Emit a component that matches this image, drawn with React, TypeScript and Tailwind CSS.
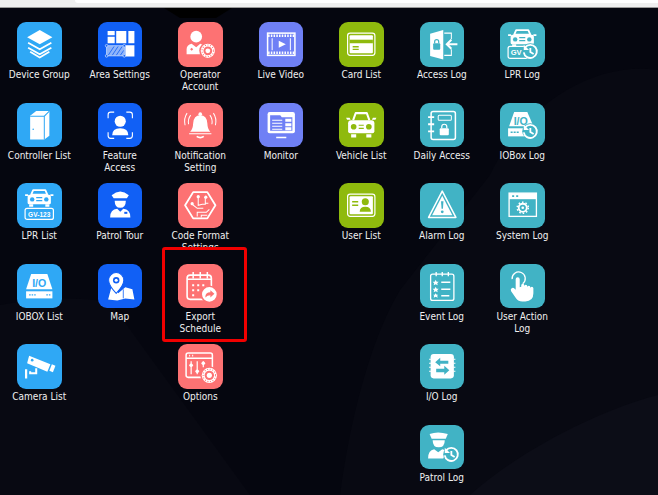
import type { ReactNode } from 'react';

const LIGHT = '#2fa8f5';
const BLUE = '#1160f5';
const CORAL = '#fd7273';
const PERI = '#6f80f5';
const GREEN = '#8fba0d';
const TEAL = '#41b3c5';

type Item = { label: string; color: string; icon: ReactNode; boxed?: boolean };

function Gear({ x, y, r, bg }: { x: number; y: number; r: number; bg: string }) {
  return (
    <g>
      <circle cx={x} cy={y} r={r + 1.5} fill={bg} />
      <circle cx={x} cy={y} r={r} fill="#fff" />
      <circle cx={x} cy={y} r={r * 0.62} fill={bg} />
      <circle cx={x} cy={y} r={r * 0.34} fill="#fff" />
      <circle cx={x} cy={y} r={r * 0.82} fill="none" stroke={bg} strokeWidth="1" strokeDasharray="1 1.6" />
    </g>
  );
}

function History({ x, y, r, bg }: { x: number; y: number; r: number; bg: string }) {
  return (
    <g>
      <circle cx={x} cy={y} r={r + 1.5} fill={bg} />
      <path d={`M${x - r * 0.8} ${y - r * 0.6}A${r} ${r} 0 1 1 ${x - r} ${y + 1}`} fill="none" stroke="#fff" strokeWidth="1.8" />
      <path d={`M${x - r} ${y - r}v${r * 0.8}h${r * 0.8}z`} fill="#fff" />
      <path d={`M${x} ${y - r * 0.5}v${r * 0.6}l${r * 0.5} ${r * 0.3}`} fill="none" stroke="#fff" strokeWidth="1.8" />
    </g>
  );
}

function Icon({ children }: { children: ReactNode }) {
  return (
    <svg viewBox="0 0 44 44" className="w-full h-full" fill="none">
      {children}
    </svg>
  );
}

function CarFront({ y = 0 }: { y?: number }) {
  return (
    <g transform={`translate(0 ${y})`}>
      <path d="M14 11.5l2-4.500h12l2 4.500z" stroke="#fff" strokeWidth="1.800" strokeLinejoin="round" />
      <path d="M10.500 13.500q0-2 2-2h19q2 0 2 2v6q0 1.500-1.500 1.500h-20q-1.500 0-1.500-1.500z" fill="#fff" />
      <path d="M8 11h3v1.800H8zM33 11h3v1.800h-3z" fill="#fff" />
      <circle cx="15" cy="16.200" r="2.200" fill="var(--t)" />
      <circle cx="29" cy="16.200" r="2.200" fill="var(--t)" />
      <path d="M19 14.500h6M19 17.500h6" stroke="var(--t)" strokeWidth="1.200" />
      <path d="M12 21h4v2.500h-4zM28 21h4v2.500h-4z" fill="#fff" />
    </g>
  );
}

const columns: Item[][] = [
  [
    {
      label: 'Device Group',
      color: LIGHT,
      icon: (
        <Icon>
          <path d="M22.500 8L35 15l-12.500 7L10 15z" fill="#fff" />
          <path d="M11 20.500l11.500 6.500L34 20.500M11 25.500L22.500 32 34 25.500M13 29.500l9.500 5.500 9.500-5.500" stroke="#fff" strokeWidth="1.700" />
        </Icon>
      ),
    },
    {
      label: 'Controller List',
      color: LIGHT,
      icon: (
        <Icon>
          <path d="M13 12.500l6-4.500h13v24.500l-5 3.500H13z" fill="#fff" />
          <path d="M27 36V13M13 13h14l5-5" stroke={LIGHT} strokeWidth="1" />
          <circle cx="16" cy="26" r="0.800" fill={LIGHT} />
        </Icon>
      ),
    },
    {
      label: 'LPR List',
      color: LIGHT,
      icon: (
        <Icon>
          <CarFront y={0} />
          <rect x="8" y="25" width="28" height="11" rx="2" stroke="#fff" strokeWidth="1.200" />
          <text x="22" y="33.500" textAnchor="middle" fontSize="6.500" fontWeight="700" fill="#fff" fontFamily="Liberation Sans">
            GV-123
          </text>
        </Icon>
      ),
    },
    {
      label: 'IOBOX List',
      color: LIGHT,
      icon: (
        <Icon>
          <path d="M14 10h16l5 15H9z" fill="#fff" />
          <text x="22" y="23" textAnchor="middle" fontSize="10.500" fontWeight="700" fill={LIGHT} fontFamily="Liberation Sans">
            I/O
          </text>
          <rect x="9" y="27" width="26" height="7" fill="#fff" />
          <path d="M12 30.500h7M29 30.500h4" stroke={LIGHT} strokeWidth="1.200" strokeDasharray="1.500 1" />
        </Icon>
      ),
    },
    {
      label: 'Camera List',
      color: LIGHT,
      icon: (
        <Icon>
          <path d="M12 11.500l21 8.500-3 7.500-20-8.500z" fill="#fff" />
          <path d="M34.500 20l3.500 1.500-2.500 6.500-3.500-1.500z" fill="#fff" />
          <circle cx="15" cy="16" r="1.300" fill={LIGHT} />
          <path d="M19 24v5h-6v-2" stroke="#fff" strokeWidth="2" />
          <path d="M9 25v9" stroke="#fff" strokeWidth="2.200" />
        </Icon>
      ),
    },
  ],
  [
    {
      label: 'Area Settings',
      color: BLUE,
      icon: (
        <Icon>
          <path d="M9.500 9h7v4h-7zM9.500 14.500h7V21h-7zM18 9h10v12H18zM30 9h6v12h-6zM27 23h9v11h-9z" fill="#fff" />
          <rect x="8.500" y="23.500" width="17.500" height="10" fill="#8fb4fa" />
          <path d="M10 33l6-9M14 33l6-9M18 33l6-9M22 33l3.500-5" stroke={BLUE} strokeWidth="0.800" />
          <rect x="8.500" y="23.500" width="17.500" height="10" stroke="#cfe0fd" strokeWidth="0.700" />
          <circle cx="8.500" cy="23.500" r="1.300" stroke="#cfe0fd" strokeWidth="0.700" fill={BLUE} />
          <circle cx="26" cy="23.500" r="1.300" stroke="#cfe0fd" strokeWidth="0.700" fill={BLUE} />
          <circle cx="8.500" cy="33.500" r="1.300" stroke="#cfe0fd" strokeWidth="0.700" fill={BLUE} />
          <circle cx="26" cy="33.500" r="1.300" stroke="#cfe0fd" strokeWidth="0.700" fill={BLUE} />
        </Icon>
      ),
    },
    {
      label: 'Feature Access',
      color: BLUE,
      icon: (
        <Icon>
          <path d="M10 15v-3.500q0-2.500 2.500-2.500H16M28 9h3.500q2.500 0 2.500 2.500V15M34 29v3.500q0 2.500-2.500 2.500H28M16 35h-3.500Q10 35 10 32.500V29" stroke="#fff" strokeWidth="1.100" />
          <circle cx="22" cy="18" r="5.500" fill="#fff" />
          <path d="M14 32q0-7 8-7t8 7z" fill="#fff" />
        </Icon>
      ),
    },
    {
      label: 'Patrol Tour',
      color: BLUE,
      icon: (
        <Icon>
          <path d="M13.500 12q8.500-7 17 0l-2 3h-13z" fill="#fff" />
          <path d="M16.500 17.500h11q0 7-5.500 7t-5.500-7z" fill="#fff" />
          <path d="M12 34q0-8 7-8.500l3 3 3-3q7 .5 7 8.500z" fill="#fff" />
          <rect x="26" y="28.500" width="3" height="2" fill={BLUE} />
        </Icon>
      ),
    },
    {
      label: 'Map',
      color: BLUE,
      icon: (
        <Icon>
          <path d="M10 35l3-11 5 1 2 4 7-6 7 2 2 10-9-1-8 2z" fill="#fff" />
          <path d="M18 8.500a7.500 7.500 0 0 1 7.500 7.500c0 5-7.500 13-7.500 13s-7.500-8-7.500-13A7.500 7.500 0 0 1 18 8.500z" fill="#fff" stroke={BLUE} strokeWidth="1" />
          <circle cx="18" cy="16" r="3.200" fill={BLUE} />
          <circle cx="18" cy="16" r="1.500" fill="#fff" />
          <path d="M25 25v9" stroke={BLUE} strokeWidth="0.800" />
        </Icon>
      ),
    },
  ],
  [
    {
      label: 'Operator Account',
      color: CORAL,
      icon: (
        <Icon>
          <circle cx="18" cy="14.500" r="5.800" fill="#fff" />
          <path d="M8.500 32v-5q0-4.500 5-5.500l4.500 3.500 4-3.500q3 .5 4 2.500l-2 8z" fill="#fff" />
          <path d="M12 27l1.500-1.500L15 27l-1.500 1.500z" fill={CORAL} />
          <Gear x={29.500} y={28.500} r={7} bg={CORAL} />
        </Icon>
      ),
    },
    {
      label: 'Notification Setting',
      color: CORAL,
      icon: (
        <Icon>
          <path d="M22 12q6.500 0 7 8 .2 6 3 8.500H12q2.800-2.500 3-8.500.5-8 7-8z" fill="#fff" />
          <circle cx="22" cy="11" r="1.800" fill="#fff" />
          <path d="M11 30.500h22" stroke="#fff" strokeWidth="1" />
          <path d="M18.500 33q3.500 2.500 7 0" stroke="#fff" strokeWidth="1.800" />
          <path d="M12.500 12q-3 4-2 9M9 10q-3.500 5-2 12M31.500 12q3 4 2 9M35 10q3.500 5 2 12" stroke="#fff" strokeWidth="1" />
        </Icon>
      ),
    },
    {
      label: 'Code Format Settings',
      color: CORAL,
      icon: (
        <Icon>
          <path d="M15 9h14l8 13-8 13H15L7 22z" stroke="#fff" strokeWidth="1.800" strokeLinejoin="round" />
          <path d="M14 21l5 4h6M20 14v8l4-1h3v-7M30 20h-3M19 33v-4h9l3-3M23 34v-2h6" stroke="#fff" strokeWidth="1" />
          <circle cx="14" cy="20.500" r="1.600" fill="#fff" />
          <circle cx="20" cy="13.500" r="1.600" fill="#fff" />
          <circle cx="27.500" cy="14" r="1.600" fill="#fff" />
        </Icon>
      ),
    },
    {
      label: 'Export Schedule',
      color: CORAL,
      boxed: true,
      icon: (
        <Icon>
          <rect x="9" y="11" width="24" height="24" rx="3" stroke="#fff" strokeWidth="1.600" />
          <path d="M15 8v6M22 8v6M29 8v6M9 15h24" stroke="#fff" strokeWidth="1.500" />
          <path d="M14 20h2v2h-2zM19 20h2v2h-2zM24 20h2v2h-2zM14 25h2v2h-2zM19 25h2v2h-2zM14 30h2v2h-2z" fill="#fff" />
          <circle cx="31" cy="30" r="8" fill="#fff" stroke={CORAL} strokeWidth="1.500" />
          <path d="M27 33q0-5 5-5v-2l4 3.500-4 3.500v-2q-3 0-5 2z" fill={CORAL} />
        </Icon>
      ),
    },
    {
      label: 'Options',
      color: CORAL,
      icon: (
        <Icon>
          <rect x="8" y="9" width="26" height="24" rx="2" stroke="#fff" strokeWidth="1.500" />
          <path d="M8 14h26" stroke="#fff" strokeWidth="1.500" />
          <path d="M11 11.500h1M14 11.500h1" stroke="#fff" strokeWidth="1.500" />
          <path d="M13 17v13M19 17v13M25 17v6" stroke="#fff" strokeWidth="1.200" />
          <circle cx="13" cy="21" r="1.800" fill="#fff" />
          <circle cx="19" cy="27" r="1.800" fill="#fff" />
          <circle cx="25" cy="19" r="1.800" fill="#fff" />
          <Gear x={31} y={31} r={7.500} bg={CORAL} />
        </Icon>
      ),
    },
  ],
  [
    {
      label: 'Live Video',
      color: PERI,
      icon: (
        <Icon>
          <rect x="8.500" y="11" width="27" height="22" stroke="#fff" strokeWidth="1.500" />
          <path d="M9 13.500h26M9 30.500h26" stroke="#fff" strokeWidth="2.500" strokeDasharray="1.500 1.200" />
          <path d="M13 16v12M31 16v12" stroke="#fff" strokeWidth="1" />
          <path d="M19.500 18.500l7 3.500-7 3.500z" fill="#fff" />
        </Icon>
      ),
    },
    {
      label: 'Monitor',
      color: PERI,
      icon: (
        <Icon>
          <rect x="8.500" y="9" width="27" height="21" rx="2" fill="#fff" />
          <path d="M11 12h10l1.500 2H33v13.500H11z" fill={PERI} />
          <path d="M24 11h3M28.500 11h3M13 17h10M13 20h10M13 23h10M13 26h10" stroke="#fff" strokeWidth="1" />
          <path d="M26 15.500h6v3h-6zM26 20h6v3h-6zM26 24h6v3h-6z" fill="#fff" />
          <path d="M17 34h10" stroke="#fff" strokeWidth="1.500" />
        </Icon>
      ),
    },
  ],
  [
    {
      label: 'Card List',
      color: GREEN,
      icon: (
        <Icon>
          <rect x="8.500" y="11" width="27" height="22" rx="2.500" stroke="#fff" strokeWidth="1.200" />
          <rect x="10.500" y="13" width="23" height="18" rx="1" fill="#fff" />
          <rect x="10.500" y="17.500" width="23" height="3.500" fill={GREEN} />
          <path d="M13.500 24.500h6M13.500 27h6" stroke={GREEN} strokeWidth="1.300" />
        </Icon>
      ),
    },
    {
      label: 'Vehicle List',
      color: GREEN,
      icon: (
        <Icon>
          <path d="M14 17l2.500-7h11L30 17" stroke="#fff" strokeWidth="2" strokeLinejoin="round" />
          <path d="M9 20q0-3 3-3h20q3 0 3 3v8q0 2-2 2H11q-2 0-2-2z" fill="#fff" />
          <path d="M7 14.500h3.500l1 2H8zM37 14.500h-3.500l-1 2H36z" fill="#fff" />
          <circle cx="14.500" cy="23.500" r="2.800" fill={GREEN} />
          <circle cx="29.500" cy="23.500" r="2.800" fill={GREEN} />
          <path d="M19.500 22h5M19.500 25h5" stroke={GREEN} strokeWidth="1.200" />
          <path d="M12 31h5v3h-5zM27 31h5v3h-5z" fill="#fff" />
        </Icon>
      ),
    },
    {
      label: 'User List',
      color: GREEN,
      icon: (
        <Icon>
          <rect x="8.500" y="11" width="27" height="22" rx="2.500" stroke="#fff" strokeWidth="1.200" />
          <rect x="10.500" y="13" width="23" height="18" rx="1" fill="#fff" />
          <path d="M13 18.500h6M13 22h6" stroke={GREEN} strokeWidth="1.600" />
          <circle cx="26" cy="18.500" r="3.500" fill={GREEN} />
          <path d="M20.500 28.500q0-5 5.500-5t5.500 5z" fill={GREEN} />
        </Icon>
      ),
    },
  ],
  [
    {
      label: 'Access Log',
      color: TEAL,
      icon: (
        <Icon>
          <path d="M10 11.500L23 8v29l-13-3.500z" fill="#fff" />
          <path d="M24 11h7v6M31 27v6h-7" stroke="#fff" strokeWidth="1" />
          <rect x="13" y="21" width="7" height="6.500" rx="1" fill={TEAL} />
          <path d="M14.500 21v-1.500a2 2 0 0 1 4 0V21" stroke={TEAL} strokeWidth="1.200" />
          <path d="M37 22H27M31 17.500L26.500 22l4.500 4.500" stroke="#fff" strokeWidth="2" />
        </Icon>
      ),
    },
    {
      label: 'Daily Access',
      color: TEAL,
      icon: (
        <Icon>
          <rect x="11" y="8.500" width="24" height="27.500" rx="2" stroke="#fff" strokeWidth="1.500" />
          <path d="M8 14h6M8 21h6M8 28h6" stroke="#fff" strokeWidth="1.800" />
          <rect x="18" y="12" width="13" height="5" rx="1" stroke="#fff" strokeWidth="1" />
          <rect x="19.500" y="25" width="9" height="7" rx="1" fill="#fff" />
          <path d="M21.500 25v-1.500a2.500 2.500 0 0 1 5 0V25" stroke="#fff" strokeWidth="1.200" />
        </Icon>
      ),
    },
    {
      label: 'Alarm Log',
      color: TEAL,
      icon: (
        <Icon>
          <path d="M22 8l13.500 26h-27z" stroke="#fff" strokeWidth="1.500" strokeLinejoin="round" />
          <path d="M22 12.500l10 19.500H12z" fill="#fff" />
          <path d="M20.800 18h2.400l-.5 7.500h-1.400z" fill={TEAL} />
          <circle cx="22" cy="28.500" r="1.400" fill={TEAL} />
        </Icon>
      ),
    },
    {
      label: 'Event Log',
      color: TEAL,
      icon: (
        <Icon>
          <rect x="10.500" y="10" width="23" height="26" rx="2" stroke="#fff" strokeWidth="1.300" />
          <path d="M16 8v4M22 8v4M28 8v4" stroke="#fff" strokeWidth="1.300" />
          <path d="M15.500 15.500l1 2h2l-1.500 1.500.5 2-2-1-2 1 .5-2-1.500-1.500h2zM15.500 22.500l1 2h2l-1.500 1.500.5 2-2-1-2 1 .5-2-1.500-1.500h2zM15.500 29l1 1.500h1.500l-1 1 .5 1.800-2-1-2 1 .5-1.800-1-1h1.500z" fill="#fff" />
          <path d="M21 18h9M21 25h9M21 31.500h8" stroke="#fff" strokeWidth="1.500" />
        </Icon>
      ),
    },
    {
      label: 'I/O Log',
      color: TEAL,
      icon: (
        <Icon>
          <rect x="10.500" y="10" width="23" height="24" rx="3" fill="#fff" />
          <path d="M9 15h2M9 19h2M9 23h2M9 27h2M33 15h2M33 19h2M33 23h2M33 27h2" stroke="#fff" strokeWidth="1" />
          <path d="M20 13.500L15 18l5 4v-2.500h8v-3h-8zM24 21.500l5 4.500-5 4.500V28h-8v-3.500h8z" fill={TEAL} />
        </Icon>
      ),
    },
    {
      label: 'Patrol Log',
      color: TEAL,
      icon: (
        <Icon>
          <path d="M9.500 9q8-3 18 0l-2 4.500h-14z" fill="#fff" />
          <path d="M12.500 15h12q0 7-6 7t-6-7z" fill="#fff" />
          <path d="M8 33q0-8 6-9l4 3 4-3q3 .5 4 2l-3 7z" fill="#fff" />
          <History x={31} y={29} r={6.500} bg={TEAL} />
        </Icon>
      ),
    },
  ],
  [
    {
      label: 'LPR Log',
      color: TEAL,
      icon: (
        <Icon>
          <CarFront y={1} />
          <rect x="8" y="24" width="24" height="12" rx="2" stroke="#fff" strokeWidth="1.200" />
          <text x="16" y="33" textAnchor="middle" fontSize="7.500" fontWeight="700" fill="#fff" fontFamily="Liberation Sans">
            GV
          </text>
          <History x={30} y={29} r={6.500} bg={TEAL} />
        </Icon>
      ),
    },
    {
      label: 'IOBox Log',
      color: TEAL,
      icon: (
        <Icon>
          <path d="M14 9h13l6 14H9z" fill="#fff" />
          <text x="20.500" y="21.500" textAnchor="middle" fontSize="10.500" fontWeight="700" fill={TEAL} fontFamily="Liberation Sans">
            I/O
          </text>
          <rect x="8" y="25" width="20" height="8" fill="#fff" />
          <path d="M10.500 29h8" stroke={TEAL} strokeWidth="1.400" strokeDasharray="2 1" />
          <History x={30} y={28} r={6.500} bg={TEAL} />
        </Icon>
      ),
    },
    {
      label: 'System Log',
      color: TEAL,
      icon: (
        <Icon>
          <rect x="9" y="10" width="27" height="23" stroke="#fff" strokeWidth="1.300" />
          <rect x="9" y="10" width="27" height="6" fill="#fff" />
          <path d="M12 13h2M16 13h2" stroke={TEAL} strokeWidth="1.600" />
          <circle cx="22.500" cy="24.500" r="4" stroke="#fff" strokeWidth="1.800" />
          <circle cx="22.500" cy="24.500" r="5.500" stroke="#fff" strokeWidth="1.500" strokeDasharray="1.500 2" />
          <circle cx="22.500" cy="24.500" r="1.300" fill="#fff" />
        </Icon>
      ),
    },
    {
      label: 'User Action Log',
      color: TEAL,
      icon: (
        <Icon>
          <path d="M12 15a6.500 6.500 0 1 1 10.500 4.500" stroke="#fff" strokeWidth="1.300" />
          <path d="M15.500 15a2 2 0 0 1 4 0v8l1.500-.5v-1.500a1.500 1.500 0 0 1 3 0v1a1.500 1.500 0 0 1 3 0v1a1.500 1.500 0 0 1 3 0v1a1.500 1.500 0 0 1 3 0v5q0 8-8 8h-3q-4 0-6-3l-5-7q-1-2 .5-3t3 .5l1 1z" fill="#fff" />
        </Icon>
      ),
    },
  ],
];

function Tile({ item }: { item: Item }) {
  return (
    <div className="relative h-[80.5px] flex flex-col items-center">
      {item.boxed && (
        <div className="absolute left-[2px] top-[-16.5px] w-[85px] h-[95px] border-[3.5px] border-[#f10000] rounded-[3px] bg-[#05060f]" />
      )}
      <div
        className="relative w-[44.5px] h-[44.5px] shrink-0 rounded-[9px] overflow-hidden"
        style={{ backgroundColor: item.color, ['--t' as string]: item.color }}
      >
        {item.icon}
      </div>
      <div className="relative mt-[2.5px] w-[66px] text-center text-[10px] leading-[12px] text-[#f0f0f0] [font-stretch:condensed]">
        {item.label}
      </div>
    </div>
  );
}

export default function App() {
  return (
    <div className="relative w-[658px] h-[495px] overflow-hidden bg-[#05060f] font-['DejaVu_Sans',sans-serif]">
      {/* faint backdrop curves */}
      <svg className="absolute inset-0" width="658" height="495" viewBox="0 0 658 495" fill="none">
        <path d="M340 495C350 420 370 340 400 290L490 175C520 110 590 60 658 70V495z" fill="#080912" />
        <path d="M0 305C40 298 70 296 110 302L250 495H0z" fill="#080912" />
        <path d="M470 495C520 450 600 410 658 395V495z" fill="#0c0d17" />
        <path d="M164 8h68l-16 10h-36z" fill="#000" />
      </svg>
      <div className="relative h-[8px] bg-[#efefef] border-b-[1px] border-[#9a9a9a]">
        <div className="ml-[75px] h-[3px] bg-white rounded-bl-[4px]" />
      </div>
      <div className="relative flex ml-[-1px] pt-[14px]">
        {columns.map((col, i) => (
          <div key={i} className="w-[80.5px] shrink-0 flex flex-col">
            {col.map(item => (
              <Tile key={item.label} item={item} />
            ))}
          </div>
        ))}
      </div>
    </div>
  );
}
